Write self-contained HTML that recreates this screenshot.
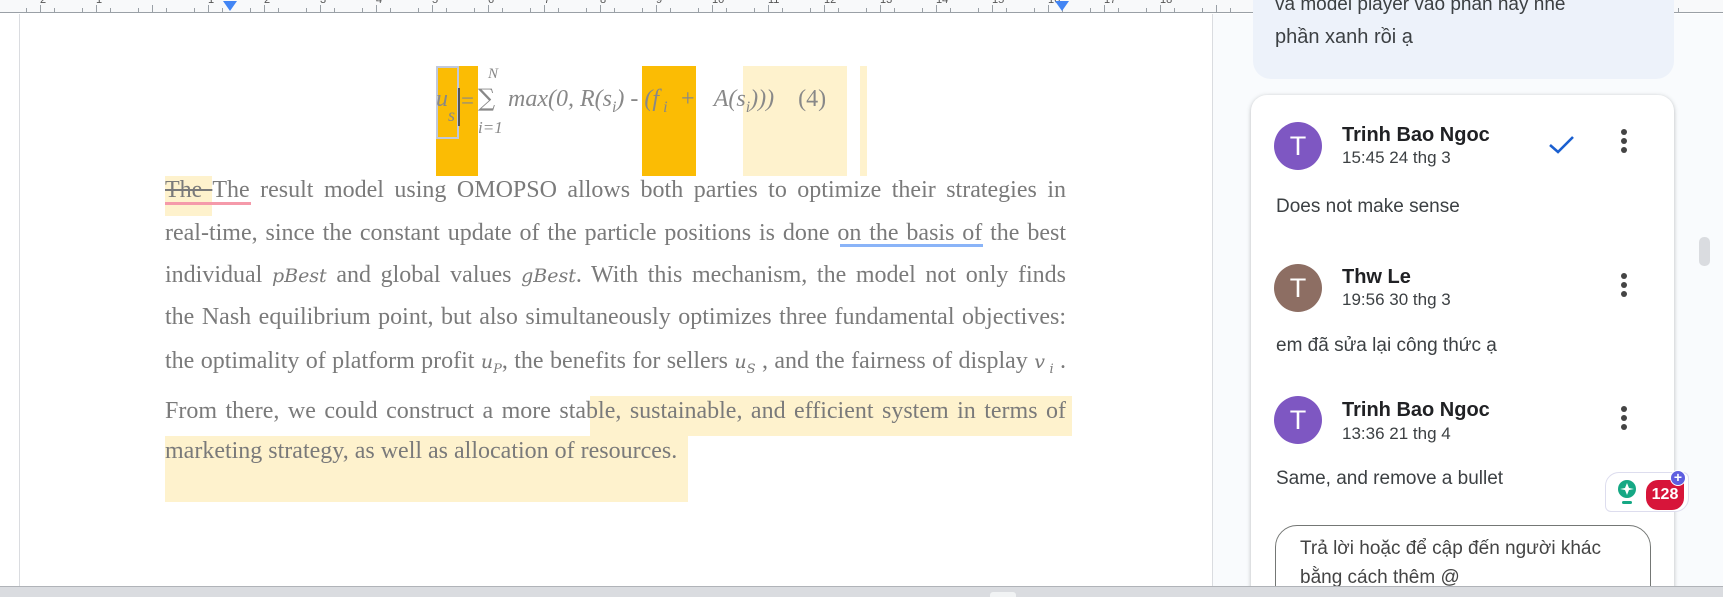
<!DOCTYPE html>
<html><head><meta charset="utf-8"><style>
*{margin:0;padding:0;box-sizing:border-box}
html,body{width:1723px;height:597px;overflow:hidden}
body{background:#fff;position:relative;font-family:"Liberation Sans",sans-serif}
.abs{position:absolute}
.ruler{left:0;top:0;width:1723px;height:13px;background:#f8f9fa;border-bottom:1px solid #9aa0a6}
.tick{position:absolute;bottom:0;width:1px;background:#9aa0a6}
.line{position:absolute;left:165px;width:901px;font-family:"Liberation Serif",serif;font-size:24px;color:#7a7a7a;text-align:justify;text-align-last:justify;white-space:nowrap;height:30px;line-height:30px}
.line.l{text-align-last:left}
.m{font-style:italic;font-family:"DejaVu Serif","Liberation Serif",serif;font-size:19px}
.name{position:absolute;left:1342px;font-size:20px;font-weight:bold;color:#202124}
.time{position:absolute;left:1342px;font-size:17px;color:#3c4043}
.av{position:absolute;left:1274px;width:48px;height:48px;border-radius:50%;color:#fff;font-size:27px;text-align:center;line-height:48px}
.txt{position:absolute;left:1276px;font-size:19px;color:#3c4043}
.dots{position:absolute;left:1621px;width:6px}
.dots i{display:block;width:6px;height:6px;border-radius:50%;background:#444;margin-bottom:3px}
</style></head><body>
<div class="abs ruler" id="r"></div>
<div class="abs" style="left:19px;top:14px;width:1px;height:572px;background:#dadce0"></div>
<div class="abs" style="left:1212px;top:14px;width:1px;height:572px;background:#dadce0"></div>
<div class="abs" style="left:1213px;top:14px;width:510px;height:572px;background:#f9fbfd"></div>
<div class="abs" style="left:222px;top:0;width:16px;height:12px;"><svg width="16" height="12"><path d="M1 0H15L8 10Z" fill="#4285f4"/></svg></div>
<div class="abs" style="left:1054px;top:0;width:16px;height:12px;"><svg width="16" height="12"><path d="M1 0H15L8 10Z" fill="#4285f4"/></svg></div>

<div class="abs" style="left:436px;top:66px;width:42px;height:110px;background:#fbbc04"></div>
<div class="abs" style="left:642px;top:66px;width:54px;height:110px;background:#fbbc04"></div>
<div class="abs" style="left:743px;top:66px;width:104px;height:110px;background:#fef2cd"></div>
<div class="abs" style="left:860px;top:66px;width:7px;height:110px;background:#fef2cd"></div>
<div class="abs" style="left:436px;top:66px;width:23px;height:73px;border:2px solid #c0c8dc"></div>
<div class="abs" style="left:458px;top:88px;width:2px;height:38px;background:#555"></div>
<div class="abs m" style="left:436px;top:86px;color:#888;font-size:24px;white-space:nowrap;font-family:'Liberation Serif',serif">u</div>
<div class="abs m" style="left:448px;top:105px;color:#888;font-size:18px;font-family:'Liberation Serif',serif">s</div>
<div class="abs" style="left:461px;top:88px;color:#888;font-size:23px;font-family:'Liberation Serif',serif">=</div>
<div class="abs" style="left:478px;top:84px;color:#888;font-size:24px;font-family:'DejaVu Serif',serif">∑</div>
<div class="abs m" style="left:488px;top:66px;color:#888;font-size:15px;font-family:'Liberation Serif',serif">N</div>
<div class="abs m" style="left:478px;top:118px;color:#888;font-size:17px;font-family:'Liberation Serif',serif">i=1</div>
<div class="abs" style="left:508px;top:86px;color:#888;font-size:24px;font-family:'Liberation Serif',serif;font-style:italic;white-space:nowrap">max(0, R(s<sub style="font-size:16px">i</sub>) - (f<sub style="font-size:16px">&nbsp;i</sub>&nbsp;&nbsp;+&nbsp;&nbsp;&nbsp;A(s<sub style="font-size:16px">i</sub>)))&nbsp;&nbsp;&nbsp;&nbsp;<span style="font-style:normal">(4)</span></div>

<div class="abs" style="left:165px;top:176px;width:47px;height:40px;background:#fef2cd"></div>
<div class="abs" style="left:165px;top:202px;width:86px;height:3px;background:#f59aaa"></div>
<div class="abs" style="left:590px;top:396px;width:482px;height:40px;background:#fef2cd"></div>
<div class="abs" style="left:165px;top:436px;width:523px;height:66px;background:#fef2cd"></div>
<div class="abs" style="left:840px;top:244px;width:143px;height:3px;background:#8ab4f8"></div>
<div class="line" style="top:175px"><s>The </s>The result model using OMOPSO allows both parties to optimize their strategies in</div>
<div class="line" style="top:218px">real-time, since the constant update of the particle positions is done on the basis of the best</div>
<div class="line" style="top:260px">individual <span class="m">pBest</span> and global values <span class="m">gBest</span>. With this mechanism, the model not only finds</div>
<div class="line" style="top:302px">the Nash equilibrium point, but also simultaneously optimizes three fundamental objectives:</div>
<div class="line" style="top:346px">the optimality of platform profit <span class="m">u<sub style="font-size:13px">P</sub></span>, the benefits for sellers <span class="m">u<sub style="font-size:13px">S</sub></span> , and the fairness of display <span class="m">v<sub style="font-size:13px"> i</sub></span> .</div>
<div class="line" style="top:396px">From there, we could construct a more stable, sustainable, and efficient system in terms of</div>
<div class="line l" style="top:436px">marketing strategy, as well as allocation of resources.</div>

<div class="abs" style="left:1253px;top:0;width:421px;height:79px;background:#edf2fa;border-radius:0 0 18px 18px"></div>
<div class="txt" style="top:-6px;left:1275px;color:#3c4043">và model player vào phần này nhé</div>
<div class="txt" style="top:26px;left:1275px;font-size:20px">phần xanh rồi ạ</div>
<div class="abs" style="left:1251px;top:95px;width:423px;height:520px;background:#fff;border-radius:16px;box-shadow:0 1px 4px rgba(60,64,67,.35)"></div>

<div class="av" style="top:122px;background:#7e57c2">T</div>
<div class="name" style="top:124px">Trinh Bao Ngoc</div>
<div class="time" style="top:148px">15:45 24 thg 3</div>
<svg class="abs" style="left:1548px;top:134px" width="28" height="22"><path d="M2 11L10 18L25 3" fill="none" stroke="#1a5fd0" stroke-width="2.6"/></svg>
<div class="dots" style="top:129px"><i></i><i></i><i></i></div>
<div class="txt" style="top:196px">Does not make sense</div>

<div class="av" style="top:264px;background:#8d6e63">T</div>
<div class="name" style="top:266px">Thw Le</div>
<div class="time" style="top:290px">19:56 30 thg 3</div>
<div class="dots" style="top:273px"><i></i><i></i><i></i></div>
<div class="txt" style="top:335px">em đã sửa lại công thức ạ</div>

<div class="av" style="top:396px;background:#7e57c2">T</div>
<div class="name" style="top:399px">Trinh Bao Ngoc</div>
<div class="time" style="top:424px">13:36 21 thg 4</div>
<div class="dots" style="top:406px"><i></i><i></i><i></i></div>
<div class="txt" style="top:468px">Same, and remove a bullet</div>

<div class="abs" style="left:1275px;top:525px;width:376px;height:100px;border:1px solid #747775;border-radius:22px"></div>
<div class="txt" style="left:1300px;top:538px;font-size:19px;color:#444">Trả lời hoặc để cập đến người khác</div>
<div class="txt" style="left:1300px;top:567px;font-size:19px;color:#444">bằng cách thêm @</div>

<div class="abs" style="left:1605px;top:472px;width:84px;height:40px;background:#fff;border:1px solid #dde;border-radius:14px 6px 14px 6px"></div>
<svg class="abs" style="left:1615px;top:478px" width="24" height="30"><circle cx="12" cy="11" r="9" fill="#15a884"/><path d="M12 5L14 10L19 11L14 12L12 17L10 12L5 11L10 10Z" fill="#fff"/><rect x="7" y="23" width="10" height="3" rx="1.5" fill="#15a884"/></svg>
<div class="abs" style="left:1646px;top:480px;width:38px;height:30px;background:#d7153a;border-radius:12px 4px 12px 12px;color:#fff;font-weight:bold;font-size:16px;text-align:center;line-height:30px">128</div>
<div class="abs" style="left:1670px;top:470px;width:16px;height:16px;border-radius:50%;background:#5e5ee0;border:1.5px solid #fff;color:#fff;font-size:14px;line-height:12px;text-align:center;font-weight:bold">+</div>

<div class="abs" style="left:1699px;top:237px;width:11px;height:29px;background:#dadce0;border-radius:5px"></div>
<div class="abs" style="left:0;top:586px;width:1723px;height:11px;background:#dadce0;border-top:1px solid #b0b3b8"></div>
<div class="abs" style="left:990px;top:592px;width:26px;height:5px;background:#f1f3f4;border-radius:3px 3px 0 0"></div>
<script>
var r=document.getElementById('r');for(var x=12;x<1700;x+=14){var d=document.createElement('div');d.className='tick';d.style.left=x+'px';d.style.height=((x-12)%56==0?0:((x-12)%28==0?7:4))+'px';r.appendChild(d);}
var nums=[-2,-1,'',1,2,3,4,5,6,7,8,9,10,11,12,13,14,15,16,17,18];
for(var i=0;i<nums.length;i++){var s=document.createElement('div');s.style.cssText='position:absolute;top:-6px;font-size:11px;color:#555;left:'+(40+i*56)+'px';s.textContent=Math.abs(nums[i])||'';r.appendChild(s);}
</script>
</body></html>
